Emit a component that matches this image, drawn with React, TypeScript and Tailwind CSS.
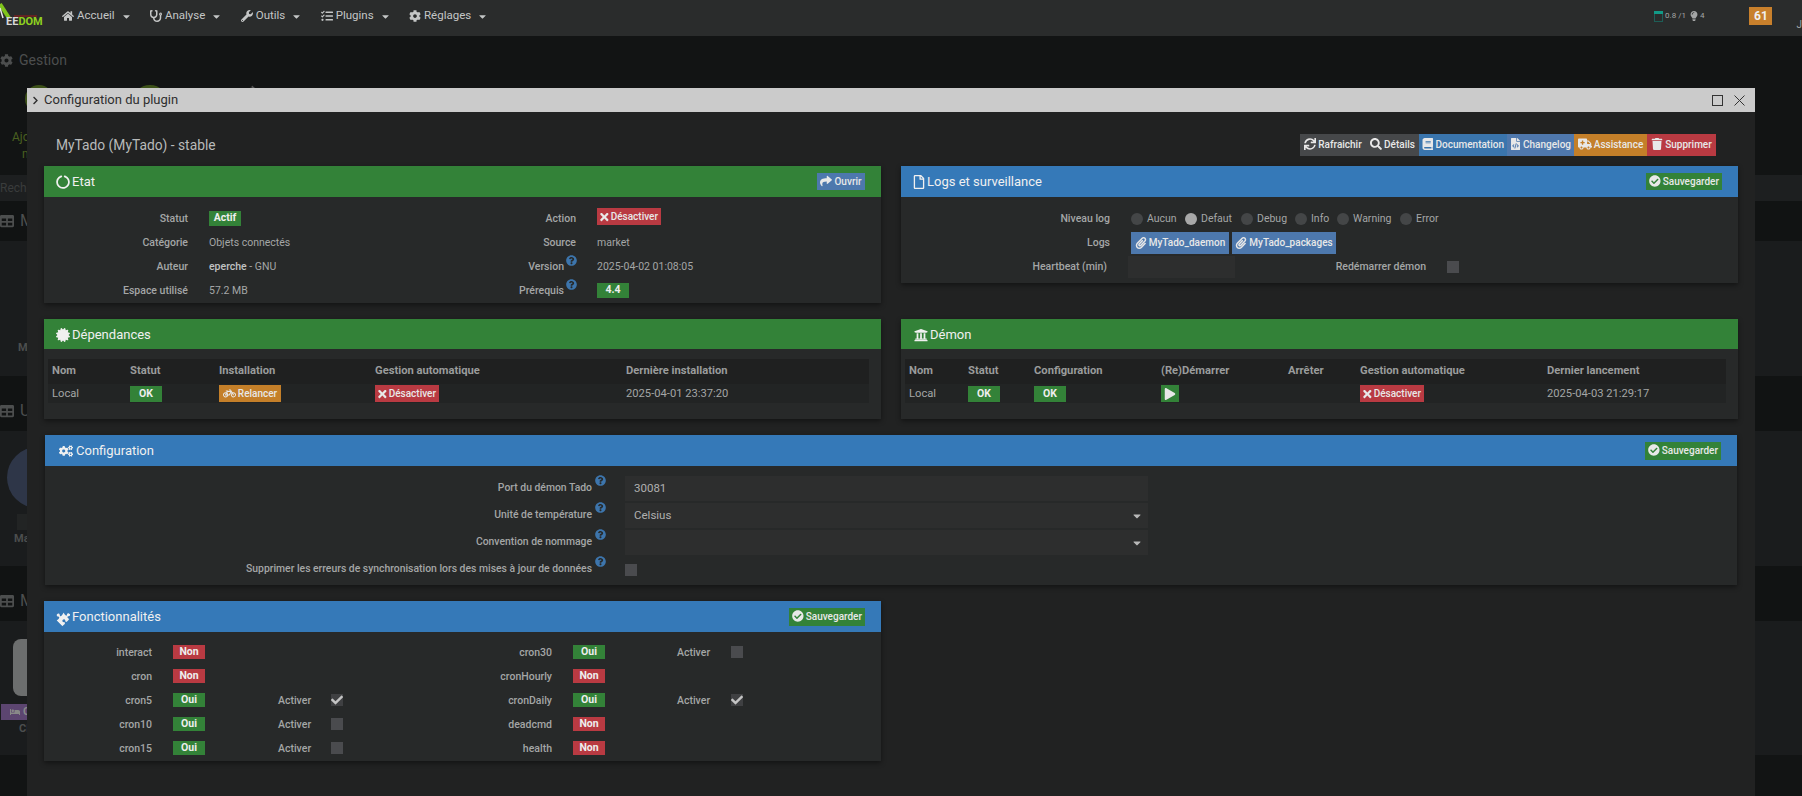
import React from "react";
import {
  FaHome, FaStethoscope, FaWrench, FaTasks, FaCog, FaCaretDown, FaChevronRight, FaCircleNotch, FaCertificate,
  FaCogs, FaPuzzlePiece, FaRegFile, FaUniversity, FaShare, FaCheckCircle, FaSync, FaSearch, FaBook, FaFileCode,
  FaAmbulance, FaTrash, FaTimes, FaBicycle, FaPlay, FaPaperclip, FaCheck, FaTable, FaBed, FaQuestionCircle, FaLightbulb,
} from "react-icons/fa";

const GREEN = "bg-[#338238]";
const BLUE = "bg-[#3579b8]";

function NavItem({ icon, label }: { icon: React.ReactNode; label: string }) {
  return (
    <div className="flex items-center gap-[3px] text-[11.5px] text-[#c4c6c6]">
      <span className="w-[12px] flex justify-center text-[12px]">{icon}</span>
      <span>{label}</span>
      <FaCaretDown className="ml-[3px] text-[11px]" />
    </div>
  );
}

function Btn({ color, icon, label, className = "" }: { color: string; icon?: React.ReactNode; label: string; className?: string }) {
  return (
    <span className={`inline-flex items-center justify-center gap-[2px] h-[17px] px-[3px] text-[10px] font-medium text-[#e8e8e8] whitespace-nowrap ${color} ${className}`}>
      {icon}
      {label}
    </span>
  );
}

function Badge({ color, label, className = "" }: { color: string; label: string; className?: string }) {
  return (
    <span className={`inline-flex items-center justify-center w-[32px] text-[10.5px] font-bold text-[#eeeeee] ${color} ${className}`}>
      {label}
    </span>
  );
}

function Help() {
  return <FaQuestionCircle className="ml-[2px] text-[11px] text-[#3d75ac] shrink-0" />;
}

function Panel({ color, icon, iconClass = "w-[14px]", title, action, className = "", headClass = "h-[31px]", children }: {
  color: string; icon: React.ReactNode; iconClass?: string; title: string; action?: React.ReactNode; className?: string; headClass?: string; children: React.ReactNode;
}) {
  return (
    <section className={`bg-[#272929] shadow-[0_2px_5px_rgba(0,0,0,0.45)] ${className}`}>
      <header className={`flex items-center justify-between pl-[12px] pr-[16px] text-white ${color} ${headClass}`}>
        <div className="flex items-center gap-[2px] text-[13px] text-[#f0f0f0]">
          <span className={`flex justify-center text-[14px] ${iconClass}`}>{icon}</span>
          <span>{title}</span>
        </div>
        {action}
      </header>
      {children}
    </section>
  );
}

const SaveBtn = ({ className = "" }: { className?: string }) => (
  <Btn color={GREEN} icon={<FaCheckCircle className="text-[12px]" />} label="Sauvegarder" className={`w-[76px] pb-px ${className}`} />
);

const Label = ({ children, help }: { children: React.ReactNode; help?: boolean }) => (
  <div className={`flex justify-end pt-px text-right font-medium ${help ? "pr-[20px]" : "pr-[21px]"}`}>
    <span>{children}</span>
    {help && <Help />}
  </div>
);

function Etat() {
  const X = <FaTimes className="text-[12px]" />;
  return (
    <Panel color={GREEN} icon={<FaCircleNotch />} title="Etat"
      action={<Btn color="bg-[#4d78ad]" icon={<FaShare className="text-[12px]" />} label="Ouvrir" className="w-[48px] pb-px" />}>
      <div className="grid grid-cols-[165px_220px_168px_1fr] auto-rows-[24px] items-center pt-[9px] pb-px text-[10.5px] leading-[24px] text-[#a4a6a6]">
        <Label>Statut</Label><div className="flex"><Badge color={GREEN} label="Actif" className="h-[15px]" /></div>
        <Label>Action</Label><div className="mb-[3px] flex"><Btn color="bg-[#b93a42]" icon={X} label="Désactiver" className="w-[64px]" /></div>
        <Label>Catégorie</Label><div className="pt-px">Objets connectés</div>
        <Label>Source</Label><div className="pt-px">market</div>
        <Label>Auteur</Label><div className="pt-px"><b className="font-medium text-[#c0c2c2]">eperche</b> - GNU</div>
        <Label help>Version</Label><div className="pt-px">2025-04-02 01:08:05</div>
        <Label>Espace utilisé</Label><div className="pt-px">57.2 MB</div>
        <Label help>Prérequis</Label><div className="flex"><Badge color={GREEN} label="4.4" className="h-[15px]" /></div>
      </div>
    </Panel>
  );
}

function Radio({ label, on, className }: { label: string; on?: boolean; className: string }) {
  return (
    <div className={`flex items-center gap-[4px] ${className}`}>
      <span className={`h-[12px] w-[12px] rounded-full ${on ? "bg-[#a8a8a8]" : "bg-[#444647]"}`} />
      <span>{label}</span>
    </div>
  );
}

function Logs() {
  const clip = <FaPaperclip className="text-[12px]" />;
  return (
    <Panel color={BLUE} icon={<FaRegFile />} iconClass="w-[12px]" title="Logs et surveillance" action={<SaveBtn />}>
      <div className="pt-[9px] pb-[5px] text-[10.5px] leading-[24px] text-[#a4a6a6]">
        <div className="grid grid-cols-[230px_1fr] items-center h-[24px]">
          <Label>Niveau log</Label>
          <div className="flex">
            <Radio label="Aucun" className="w-[54px]" />
            <Radio label="Defaut" on className="w-[56px]" />
            <Radio label="Debug" className="w-[54px]" />
            <Radio label="Info" className="w-[42px]" />
            <Radio label="Warning" className="w-[63px]" />
            <Radio label="Error" className="w-[40px]" />
          </div>
        </div>
        <div className="grid grid-cols-[230px_1fr] items-center h-[24px]">
          <Label>Logs</Label>
          <div className="flex gap-[3px]">
            <Btn color="bg-[#4d78ad]" icon={clip} label="MyTado_daemon" className="h-[22px] w-[98px]" />
            <Btn color="bg-[#4d78ad]" icon={clip} label="MyTado_packages" className="h-[22px] w-[104px]" />
          </div>
        </div>
        <div className="grid grid-cols-[227px_107px_212px_1fr] items-center h-[24px]">
          <Label>Heartbeat (min)</Label>
          <div className="h-[22px] bg-[#2d2e2e]" />
          <Label>Redémarrer démon</Label>
          <span className="h-[12px] w-[12px] bg-[#4a4b4e]" />
        </div>
      </div>
    </Panel>
  );
}

function DesactiverBtn() {
  return <Btn color="bg-[#b93a42]" icon={<FaTimes className="text-[12px]" />} label="Désactiver" className="w-[64px]" />;
}
const Ok = () => <Badge color={GREEN} label="OK" className="h-[16px]" />;

function Dep() {
  const cols = "grid-cols-[78px_89px_156px_251px_1fr]";
  return (
    <Panel color={GREEN} icon={<FaCertificate />} title="Dépendances" headClass="h-[30px] pt-[2px]">
      <div className="pt-[10px] pb-[16px] pl-[4px] pr-[12px] text-[11.2px] text-[#a4a6a6]">
        <div className={`grid ${cols} pl-[4px] h-[25px] items-center bg-[#1f2020] font-bold text-[#9a9c9c]`}>
          <div>Nom</div><div>Statut</div><div>Installation</div><div>Gestion automatique</div><div>Dernière installation</div>
        </div>
        <div className={`grid ${cols} pl-[4px] h-[19px] items-center bg-[#222424]`}>
          <div className="pt-[2px]">Local</div>
          <div className="flex"><Ok /></div>
          <div className="flex"><Btn color="bg-[#c47f29]" icon={<FaBicycle className="text-[13px]" />} label="Relancer" className="w-[62px]" /></div>
          <div className="flex"><DesactiverBtn /></div>
          <div className="pt-[2px]">2025-04-01 23:37:20</div>
        </div>
      </div>
    </Panel>
  );
}

function Demon() {
  const cols = "grid-cols-[59px_66px_127px_127px_72px_187px_1fr]";
  return (
    <Panel color={GREEN} icon={<FaUniversity />} iconClass="w-[15px]" title="Démon" headClass="h-[30px] pt-[2px]">
      <div className="pt-[10px] pb-[16px] pl-[4px] pr-[12px] text-[11.2px] text-[#a4a6a6]">
        <div className={`grid ${cols} pl-[4px] h-[25px] items-center bg-[#1f2020] font-bold text-[#9a9c9c]`}>
          <div>Nom</div><div>Statut</div><div>Configuration</div><div>(Re)Démarrer</div><div>Arrêter</div><div>Gestion automatique</div><div>Dernier lancement</div>
        </div>
        <div className={`grid ${cols} pl-[4px] h-[19px] items-center bg-[#222424]`}>
          <div className="pt-[2px]">Local</div>
          <div className="flex"><Ok /></div>
          <div className="flex"><Ok /></div>
          <div className="flex"><span className={`flex h-[17px] w-[18px] items-center justify-center text-[12px] text-[#e8e8e8] ${GREEN}`}><FaPlay /></span></div>
          <div />
          <div className="flex"><DesactiverBtn /></div>
          <div className="pt-[2px]">2025-04-03 21:29:17</div>
        </div>
      </div>
    </Panel>
  );
}

function Select({ value }: { value?: string }) {
  return (
    <div className="flex h-[25px] w-[523px] items-center justify-between bg-[#2d2e2e] pl-[9px] pr-[5px] text-[11.5px] text-[#b0b0b0]">
      <span>{value}</span>
      <FaCaretDown className="text-[12px] text-[#b8b8b8]" />
    </div>
  );
}

function Config() {
  const rows: [string, React.ReactNode][] = [
    ["Port du démon Tado", <div className="flex h-[25px] w-[523px] items-center bg-[#2d2e2e] pl-[9px] text-[11.5px] text-[#b0b0b0]">30081</div>],
    ["Unité de température", <Select value="Celsius" />],
    ["Convention de nommage", <Select />],
    ["Supprimer les erreurs de synchronisation lors des mises à jour de données", <span className="block h-[12px] w-[12px] bg-[#4a4b4e]" />],
  ];
  return (
    <Panel color={BLUE} icon={<FaCogs />} iconClass="w-[17px]" title="Configuration" className="mx-px" action={<SaveBtn className="h-[18px]" />}>
      <div className="pt-[8px] pb-[3px] text-[10.4px] text-[#a4a6a6]">
        {rows.map(([l, c]) => (
          <div key={l} className="grid grid-cols-[580px_1fr] h-[27px] items-center">
            <div className="flex justify-end pr-[19px] pb-[2px] font-medium leading-[27px]">
              <span>{l}</span>
              <FaQuestionCircle className="ml-[3px] mt-[1px] text-[11px] text-[#3d75ac]" />
            </div>
            <div>{c}</div>
          </div>
        ))}
      </div>
    </Panel>
  );
}

type Feat = { name: string; ok: boolean; act?: boolean };

function FeatGroup({ items, cols }: { items: Feat[]; cols: string }) {
  return (
    <div>
      {items.map((f) => (
        <div key={f.name} className={`grid h-[24px] items-center ${cols}`}>
          <div className="pr-[21px] pt-[2px] text-right font-medium">{f.name}</div>
          <div className="flex"><Badge color={f.ok ? GREEN : "bg-[#b93a42]"} label={f.ok ? "Oui" : "Non"} className="h-[14px]" /></div>
          {f.act !== undefined ? <div className="pt-[2px] font-medium">Activer</div> : <div />}
          {f.act !== undefined ? (
            <span className={`flex h-[12px] w-[12px] items-center justify-center text-[12px] text-[#c4c4c4] ${f.act ? "bg-[#3f4042]" : "bg-[#4a4b4e]"}`}>
              {f.act && <FaCheck />}
            </span>
          ) : <div />}
        </div>
      ))}
    </div>
  );
}

function Fonct() {
  const left: Feat[] = [
    { name: "interact", ok: false }, { name: "cron", ok: false }, { name: "cron5", ok: true, act: true },
    { name: "cron10", ok: true, act: false }, { name: "cron15", ok: true, act: false },
  ];
  const right: Feat[] = [
    { name: "cron30", ok: true, act: false }, { name: "cronHourly", ok: false }, { name: "cronDaily", ok: true, act: true },
    { name: "deadcmd", ok: false }, { name: "health", ok: false },
  ];
  return (
    <Panel color={BLUE} icon={<FaPuzzlePiece className="-rotate-45" />} title="Fonctionnalités" action={<SaveBtn className="h-[18px]" />}>
      <div className="grid grid-cols-[352px_1fr] pt-[8px] pb-px text-[10.5px] text-[#a4a6a6]">
        <FeatGroup items={left} cols="grid-cols-[129px_105px_53px_1fr]" />
        <FeatGroup items={right} cols="grid-cols-[177px_104px_54px_1fr]" />
      </div>
    </Panel>
  );
}

function Background() {
  const head = "flex items-center gap-[6px] text-[16px] text-[#4c4e4e]";
  return (
    <div className="h-[760px] bg-[#121414] text-[#4c4e4e]">
      <div className="flex h-[139px] flex-col">
        <div className="flex h-[49px] items-center gap-[6px] text-[14px]"><FaCog className="text-[13px]" /><span>Gestion</span></div>
        <div className="flex flex-1">
          <div className="w-[60px] pl-[25px]"><div className="h-[28px] w-[28px] rounded-full border-[3px] border-[#3d5219]" /></div>
          <div className="ml-[72px] h-[36px] w-[36px] rounded-full border-[3px] border-[#3d5219]" />
          <FaShare className="ml-[78px] text-[10px] text-[#555]" />
        </div>
        <div className="h-0 overflow-visible pl-[12px] text-[12px] leading-[17px] text-[#4a6020] -translate-y-[46px]">Ajouter<br /><span className="pl-[10px]">m</span></div>
      </div>
      <div className="flex h-[26px] items-center bg-[#1d1f20] text-[12px] text-[#3a3c3c]">Rechercher</div>
      <div className={`${head} h-[40px] bg-[#111313]`}><FaTable className="text-[14px]" /><span>M</span></div>
      <div className="flex h-[135px] items-end justify-start bg-[#1a1c1d] pb-[20px] pl-[18px] text-[11px] font-bold">Ma</div>
      <div className={`${head} h-[55px] bg-[#111313] pt-[14px]`}><FaTable className="text-[14px]" /><span>U</span></div>
      <div className="h-[135px] bg-[#1a1c1d] pt-[16px] text-[11px] font-bold">
        <div className="ml-[7px] h-[61px] w-[61px] rounded-full bg-[#2e3648]" />
        <div className="ml-[17px] mt-[6px] h-[16px] w-[14px] bg-[#222424]" />
        <div className="pl-[14px] pt-px">Ma</div>
      </div>
      <div className={`${head} h-[55px] bg-[#111313] pt-[14px]`}><FaTable className="text-[14px]" /><span>M</span></div>
      <div className="h-[134px] bg-[#1a1c1d] pt-[18px] text-[11px] font-bold">
        <div className="ml-[13px] h-[57px] w-[40px] rounded-[8px] bg-[#6c6e6e]" />
        <div className="ml-[1px] mt-[8px] flex h-[16px] w-[60px] items-center gap-[3px] bg-[#5c4570] pl-[9px] text-[#888]"><FaBed className="text-[10px]" /><span>Cl</span></div>
        <div className="pl-[19px] pt-px">Cl</div>
      </div>
    </div>
  );
}

export default function App() {
  const doc = "text-[12px]";
  const top = "h-[22px] pb-[2px]";
  return (
    <div className="relative h-[796px] w-[1802px] overflow-hidden bg-[#121414] [font-family:Roboto,sans-serif]">
      <nav className="flex h-[36px] items-center bg-[#2a2c2c] pb-[4px]">
        <div className="relative h-[36px] w-[62px] shrink-0 -mb-[4px]">
          <svg className="absolute left-0 top-0" width="46" height="30" viewBox="0 0 46 30">
            <path d="M0 4 L9 18" stroke="#7fc31c" strokeWidth="4" fill="none" />
            <path d="M0 8 L3 18" stroke="#e8e8e8" strokeWidth="1.5" fill="none" />
            <path d="M14 16 H37" stroke="#7a1f1f" strokeWidth="1.5" fill="none" />
          </svg>
          <span className="absolute left-[6px] top-[15px] text-[11px] font-bold leading-[14px] text-[#d8d8d8]">EE<span className="text-[#8fd11f]">DOM</span></span>
        </div>
        <div className="flex gap-[18.4px]">
          <NavItem icon={<FaHome />} label="Accueil" />
          <NavItem icon={<FaStethoscope />} label="Analyse" />
          <NavItem icon={<FaWrench />} label="Outils" />
          <NavItem icon={<FaTasks />} label="Plugins" />
          <NavItem icon={<FaCog />} label="Réglages" />
        </div>
        <div className="ml-auto flex items-center text-[8px] text-[#a4a6a6]">
          <svg width="9" height="11" viewBox="0 0 9 11" className="mr-[2px]">
            <rect x="0.5" y="0.5" width="8" height="10" fill="none" stroke="#1d5e57" />
            <rect x="0" y="0" width="9" height="3" fill="#129a87" />
          </svg>
          <span>0.8 /1</span>
          <FaLightbulb className="ml-[3px] text-[10px]" />
          <span className="ml-px">4</span>
          <span className="ml-[45px] flex h-[18px] w-[23px] items-center justify-center bg-[#c8802c] text-[12px] font-bold text-[#f0f0f0]">61</span>
          <span className="ml-[24px] mt-[16px] text-[10px] text-[#a4a6a6]">J</span>
        </div>
      </nav>

      <Background />

      <div className="absolute left-[27px] top-[88px] h-[708px] w-[1728px] bg-[#212222]">
        <div className="flex h-[24px] items-center bg-[#cbcbcb] pl-[4px] pr-[10px] text-[13px] text-[#2e2e2e]">
          <FaChevronRight className="text-[9px]" />
          <span className="ml-[4px]">Configuration du plugin</span>
          <svg className="ml-auto" width="11" height="11" viewBox="0 0 11 11"><rect x="0.5" y="0.5" width="10" height="10" fill="none" stroke="#333" /></svg>
          <svg className="ml-[11px]" width="11" height="11" viewBox="0 0 11 11"><path d="M0.5 0.5 L10.5 10.5 M10.5 0.5 L0.5 10.5" stroke="#333" /></svg>
        </div>
        <div className="px-[17px] pt-[22px]">
          <div className="mb-[10px] flex h-[22px] items-center justify-between pl-[12px] pr-[22px]">
            <h1 className="text-[13.8px] font-normal text-[#b8baba]">MyTado (MyTado) - stable</h1>
            <div className="flex">
              <Btn color="bg-[#46484a]" icon={<FaSync className={doc} />} label="Rafraichir" className={`${top} w-[66px]`} />
              <Btn color="bg-[#46484a]" icon={<FaSearch className={doc} />} label="Détails" className={`${top} w-[53px]`} />
              <Btn color="bg-[#3a75ad]" icon={<FaBook className={doc} />} label="Documentation" className={`${top} w-[88px]`} />
              <Btn color="bg-[#4f78ad]" icon={<FaFileCode className={doc} />} label="Changelog" className={`${top} w-[67px]`} />
              <Btn color="bg-[#c47f29]" icon={<FaAmbulance className="text-[14px]" />} label="Assistance" className={`${top} w-[73px]`} />
              <Btn color="bg-[#b93a42]" icon={<FaTrash className={doc} />} label="Supprimer" className={`${top} w-[69px]`} />
            </div>
          </div>
          <div className="grid grid-cols-[837px_837px] items-start gap-x-[20px] gap-y-[16px]">
            <Etat />
            <Logs />
            <Dep />
            <Demon />
            <div className="col-span-2"><Config /></div>
            <Fonct />
          </div>
        </div>
      </div>
    </div>
  );
}
